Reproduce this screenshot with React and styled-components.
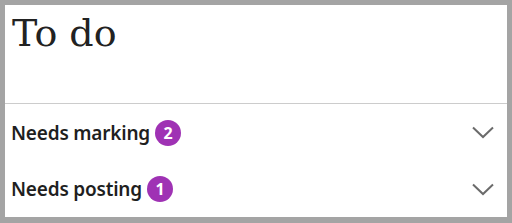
import React from "react";
import styled, { createGlobalStyle } from "styled-components";

const Global = createGlobalStyle`
  html, body {
    margin: 0;
    padding: 0;
    background: #ffffff;
  }
`;

const items = [
  { label: "Needs marking", count: 2 },
  { label: "Needs posting", count: 1 },
];

const Chevron = () => (
  <svg width="22" height="13" viewBox="0 0 22 13">
    <polyline
      points="1,1.5 11,11 21,1.5"
      fill="none"
      stroke="#6b6b6b"
      strokeWidth="2"
    />
  </svg>
);

const App = () => {
  return (
    <>
      <Global />
      <Panel>
        <Header>
          <Title>To do</Title>
        </Header>
        {items.map((item, i) => (
          <Row key={item.label} last={i === items.length - 1}>
            <Label>
              {item.label}
              <Badge>{item.count}</Badge>
            </Label>
            <Chevron />
          </Row>
        ))}
      </Panel>
    </>
  );
};

export default App;

const Panel = styled.div`
  box-sizing: border-box;
  width: 512px;
  height: 223px;
  border: 5px solid #a4a4a4;
  border-bottom-width: 6px;
  background: #fff;
  display: flex;
  flex-direction: column;
`;

const Header = styled.div`
  box-sizing: border-box;
  height: 99px;
  padding: 0 7px;
  border-bottom: 1px solid #cccccc;
`;

const Title = styled.h1`
  margin: 0;
  padding-top: 5px;
  font-family: "DejaVu Serif", serif;
  font-weight: normal;
  font-size: 38px;
  line-height: 46px;
  color: #222;
`;

const Row = styled.div`
  height: ${(p) => (p.last ? "56px" : "57px")};
  display: flex;
  align-items: center;
  justify-content: space-between;
  padding: 0 13px 0 6px;
`;

const Label = styled.div`
  display: flex;
  align-items: center;
  font-family: "Noto Sans", sans-serif;
  font-weight: 600;
  font-size: 19px;
  letter-spacing: -0.2px;
  color: #1f1f1f;
`;

const Badge = styled.span`
  display: inline-flex;
  align-items: center;
  justify-content: center;
  width: 26px;
  height: 26px;
  border-radius: 50%;
  margin-left: 5px;
  background: #9f32b4;
  color: #fff;
  font-size: 16px;
  font-weight: 700;
  letter-spacing: 0;
`;
